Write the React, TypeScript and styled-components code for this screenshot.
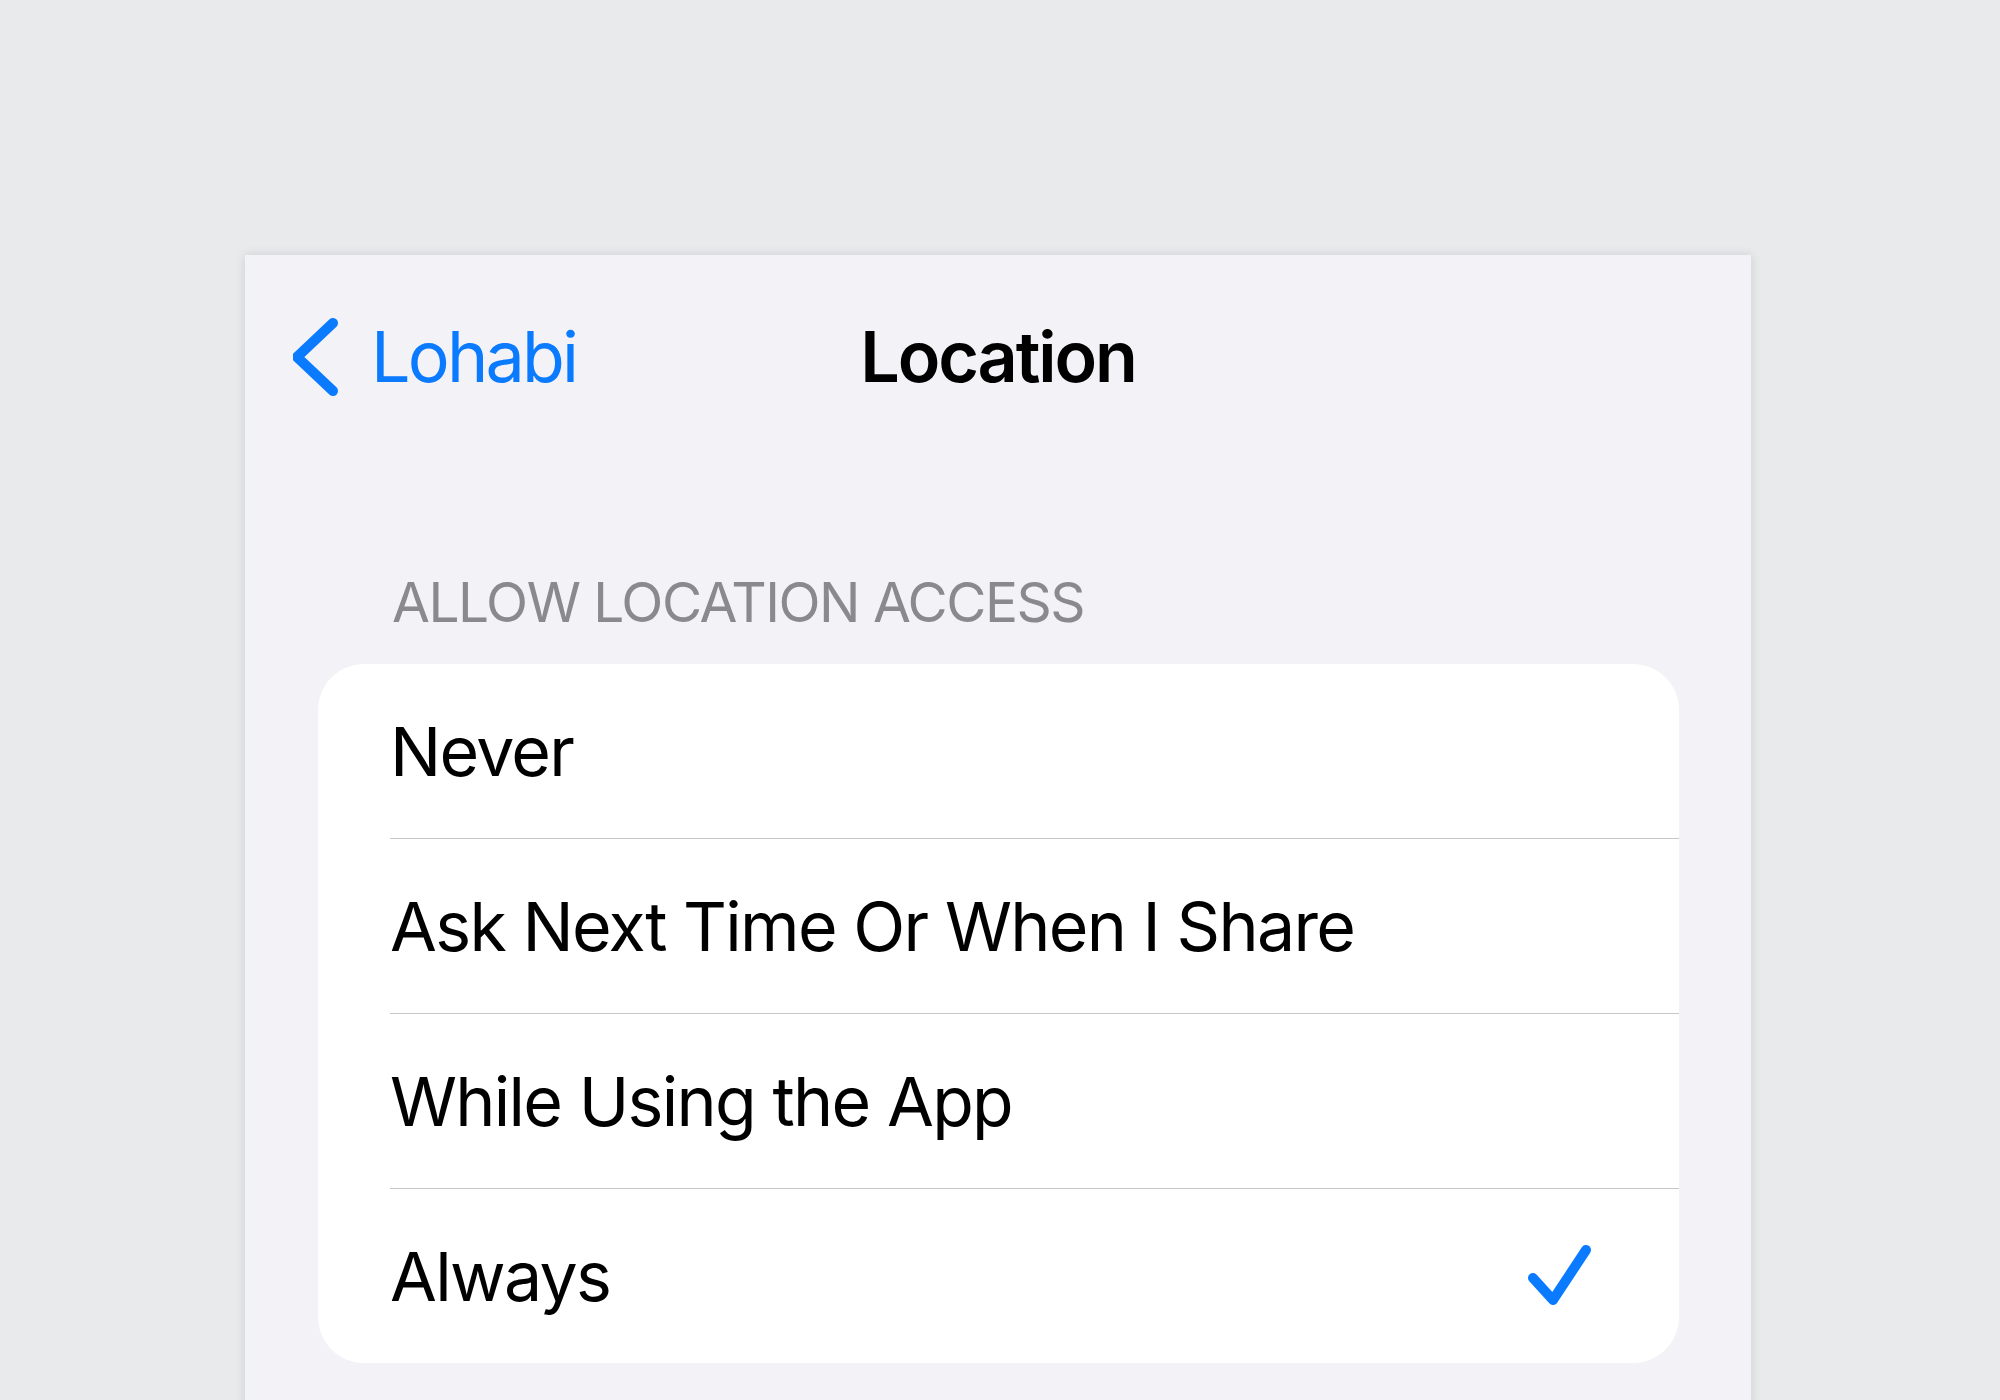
import * as React from 'react'
import styled, { createGlobalStyle } from 'styled-components'

const GlobalStyle = createGlobalStyle`
    html, body {
        margin: 0;
        padding: 0;
        background: #e9eaec;
        font-family: Inter, 'Noto Sans', sans-serif;
        overflow: hidden;
    }
`

const Page = styled.div`
    height: 1400px;
    padding-top: 255px;
    padding-left: 245px;
    box-sizing: border-box;
`

const Sheet = styled.div`
    width: 1506px;
    height: 1200px;
    background: #f2f2f7;
    box-shadow: 0 0 10px rgba(0, 0, 0, 0.12);
`

const NavBar = styled.div`
    display: grid;
    grid-template-columns: 1fr auto 1fr;
    align-items: center;
    height: 204px;
`

const BackButton = styled.div`
    display: flex;
    align-items: center;
    gap: 32px;
    padding-left: 48px;
    color: #0a7aff;
    font-size: 70px;
    line-height: 1;
    letter-spacing: -2.8px;
`

const Title = styled.div`
    font-size: 70px;
    font-weight: 600;
    line-height: 1;
    letter-spacing: -2.1px;
    color: #000;
`

const SectionHeader = styled.div`
    margin: 116px 0 34px 147px;
    font-size: 55px;
    line-height: 1;
    color: #8a8a8e;
    letter-spacing: -1.5px;
`

const Card = styled.div`
    margin-left: 73px;
    width: 1361px;
    background: #fff;
    border-radius: 46px;
    overflow: hidden;
`

const Row = styled.div<{ $last?: boolean }>`
    display: flex;
    align-items: center;
    justify-content: space-between;
    height: 174px;
    margin-left: 72px;
    padding-right: 88px;
    border-bottom: ${p => (p.$last ? 'none' : '1.5px solid #c6c6c8')};
    font-size: 68px;
    line-height: 1;
    color: #000;
    letter-spacing: -1.7px;
`

const Check = () => (
    <svg width="66" height="66" viewBox="0 0 66 66" fill="none">
        <path d="M8 35 L28 57 L61 7" stroke="#0a7aff" strokeWidth="10" strokeLinecap="round" strokeLinejoin="round" />
    </svg>
)

const Chevron = () => (
    <svg width="46" height="80" viewBox="0 0 46 80" fill="none">
        <path d="M40 6 L4 40 L40 74" stroke="#0a7aff" strokeWidth="10" strokeLinecap="round" strokeLinejoin="round" />
    </svg>
)

const options = ['Never', 'Ask Next Time Or When I Share', 'While Using the App', 'Always']
const selected = 'Always'

export default function App() {
    return (
        <Page>
            <GlobalStyle />
            <Sheet>
                <NavBar>
                    <BackButton>
                        <Chevron />
                        <span>Lohabi</span>
                    </BackButton>
                    <Title>Location</Title>
                    <div />
                </NavBar>
                <SectionHeader>ALLOW LOCATION ACCESS</SectionHeader>
                <Card>
                    {options.map((o, i) => (
                        <Row key={o} $last={i === options.length - 1}>
                            <span>{o}</span>
                            {o === selected && <Check />}
                        </Row>
                    ))}
                </Card>
            </Sheet>
        </Page>
    )
}
